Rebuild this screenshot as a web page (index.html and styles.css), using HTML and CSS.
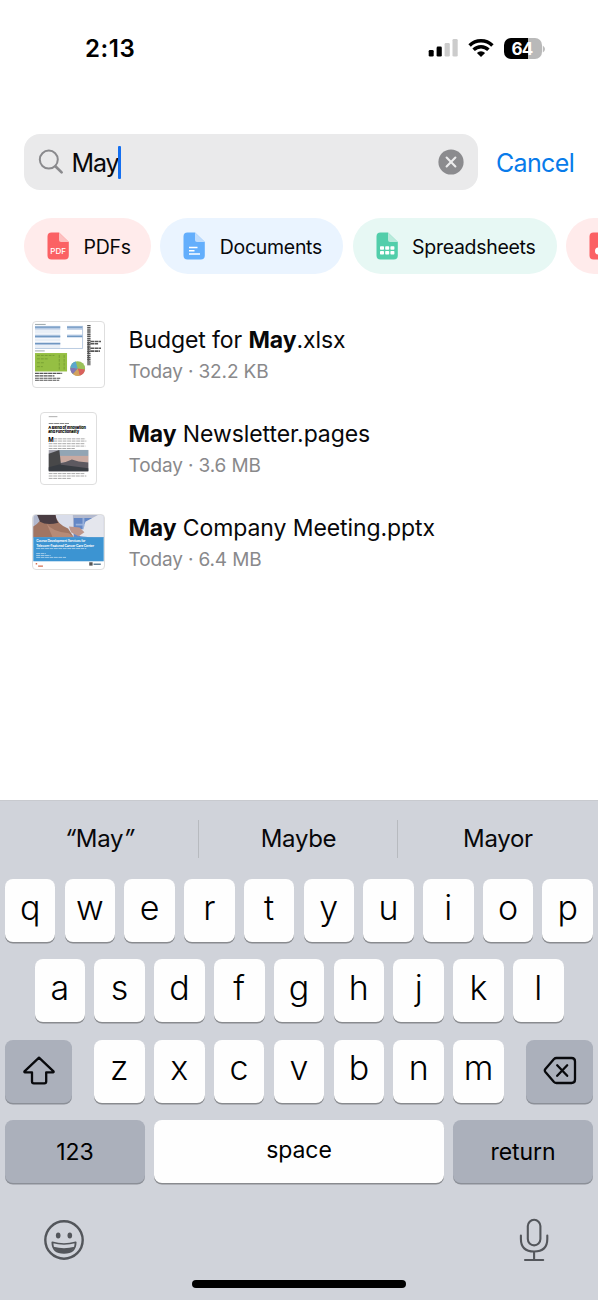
FILE: index.html
```
<!DOCTYPE html>
<html lang="en">
<head>
<meta charset="utf-8">
<title>Search files</title>
<link rel="stylesheet" href="styles.css">
</head>
<body>
<div class="phone">
  <header class="status">
    <span class="time">2:13</span>
    <div class="indicators">
      <svg class="signal" width="30" height="20" viewBox="0 0 30 20"><rect x="0.7" y="12" width="5" height="6.6" rx="1.3"/><rect x="8.6" y="8.6" width="5.2" height="10" rx="1.3"/><g fill="#cccccc"><rect x="16.6" y="5" width="5.2" height="13.6" rx="1.3"/><rect x="24.5" y="1" width="5.2" height="17.6" rx="1.3"/></g></svg>
      <svg class="wifi" width="26" height="20" viewBox="0 0 26 20"><g fill="none" stroke="#000" stroke-width="3.5"><path d="M1.6 7.5A16.2 16.2 0 0 1 24.4 7.5"/><path d="M5.6 11.7A10.6 10.6 0 0 1 20.4 11.7"/></g><path d="M13 19L8.9 14.9A5.8 5.8 0 0 1 17.1 14.9Z"/></svg>
      <div class="battery"><span>64</span><svg width="4" height="8" viewBox="0 0 4 8"><path d="M0.8 0.5Q3 2 3 4Q3 6 0.8 7.5Z" fill="#bcbcbc"/></svg></div>
    </div>
  </header>

  <div class="search-row">
    <div class="search">
      <svg class="glass" width="26" height="26" viewBox="0 0 26 26"><g fill="none" stroke="#8a8a8d" stroke-linecap="round"><circle cx="10.8" cy="10.6" r="9" stroke-width="2"/><path d="M17.6 17.5L23.6 23.4" stroke-width="2.7"/></g></svg>
      <span class="query">May</span><span class="caret"></span>
      <svg class="clear" width="26" height="26" viewBox="0 0 26 26"><circle cx="13" cy="13" r="12.6" fill="#8b8b8e"/><path d="M8.6 8.6L17.4 17.4M17.4 8.6L8.6 17.4" stroke="#ececed" stroke-width="2.1" stroke-linecap="round"/></svg>
    </div>
    <span class="cancel">Cancel</span>
  </div>

  <nav class="chips">
    <div class="chip pdf"><svg width="22" height="28" viewBox="0 0 22 28"><path d="M4.5 0.5H12L21.8 10V23.5a4 4 0 0 1-4 4H4.5a4 4 0 0 1-4-4V4.500a4 4 0 0 1 4-4Z" fill="#fb6164"/><path d="M12 0.500L21.800 10H14a2 2 0 0 1-2-2Z" fill="#fdbfbf"/><text x="11.100" y="21.600" class="pdf-label">PDF</text></svg><span>PDFs</span></div>
    <div class="chip doc"><svg width="22" height="28" viewBox="0 0 22 28"><path d="M4.500 0.500H12L21.800 10V23.500a4 4 0 0 1-4 4H4.500a4 4 0 0 1-4-4V4.500a4 4 0 0 1 4-4Z" fill="#63aefc"/><path d="M12 0.500L21.800 10H14a2 2 0 0 1-2-2Z" fill="#bedcfd"/><path d="M6 15.500H14.500M6 18.700H11.500M6 21.900H17" stroke="#fff" stroke-width="1.500"/></svg><span>Documents</span></div>
    <div class="chip sheet"><svg width="22" height="28" viewBox="0 0 22 28"><path d="M4.500 0.500H12L21.800 10V23.500a4 4 0 0 1-4 4H4.500a4 4 0 0 1-4-4V4.500a4 4 0 0 1 4-4Z" fill="#52ceaa"/><path d="M12 0.500L21.800 10H14a2 2 0 0 1-2-2Z" fill="#b9eadb"/><g fill="#fff"><rect x="4" y="14.300" width="4" height="3.500" rx=".7"/><rect x="9.200" y="14.300" width="4" height="3.500" rx=".7"/><rect x="14.400" y="14.300" width="4" height="3.500" rx=".7"/><rect x="4" y="19" width="4" height="3.500" rx=".7"/><rect x="9.200" y="19" width="4" height="3.500" rx=".7"/><rect x="14.400" y="19" width="4" height="3.500" rx=".7"/></g></svg><span>Spreadsheets</span></div>
    <div class="chip photo"><svg width="22" height="28" viewBox="0 0 22 28"><path d="M4.500 0.500H12L21.800 10V23.500a4 4 0 0 1-4 4H4.500a4 4 0 0 1-4-4V4.500a4 4 0 0 1 4-4Z" fill="#fb6164"/><circle cx="9.500" cy="19" r="3.500" fill="#fff"/></svg></div>
  </nav>

  <main class="files">
    <article class="file">
      <div class="thumb-cell">
        <svg class="thumb" width="73" height="67" viewBox="0 0 73 67">
          <g fill="#b7cbe4"><rect x="2" y="4" width="26" height="4"/><rect x="35" y="4" width="16" height="4"/><rect x="2" y="13" width="26" height="3.500"/><rect x="35" y="13" width="16" height="3"/><rect x="2" y="21" width="26" height="3"/></g>
          <g fill="#e9eff7"><rect x="2" y="8" width="26" height="4"/><rect x="2" y="17" width="26" height="3"/><rect x="2" y="24" width="26" height="3"/></g>
          <path d="M2 5.300H28M35 5.300H51M2 14.800H28M35 14.800H51M2 22.300H28" stroke="#628dbb" stroke-width="1"/>
          <path d="M28 27.300H51V4M2 27.300H28" fill="none" stroke="#a7bdd8" stroke-width=".8"/>
          <path d="M2 2.500H13M2 29.800H12" stroke="#9aa4a8" stroke-width="1"/>
          <g stroke="#555" fill="none"><path d="M57.500 3V45" stroke-width="3.500" stroke-dasharray="1.500 .7"/><path d="M57 20V40M59 20H70M59 22.500H67M59 27H70M59 30H69" stroke-width="1.600" stroke-dasharray="4 .5"/></g>
          <rect x="2" y="32" width="33" height="19" fill="#95bf43"/><path d="M4 34.500H22M4 38H16M4 42H11M4 46H10M27 34V50M32 34V50" stroke="#719730" stroke-width=".8" stroke-dasharray="3 1"/>
          <path d="M2 53H30M2 55.500H22M2 58H28M2 60H27" stroke="#555" stroke-width="1.200" stroke-dasharray="4 .5"/>
          <g transform="translate(46 48)"><circle r="7.600" fill="#9bc15a"/><path d="M0 0L7.500 1A7.600 7.600 0 0 1 2 7.300Z" fill="#d9615d"/><path d="M0 0L2 7.300A7.600 7.600 0 0 1-5 5.700Z" fill="#d5a15e"/><path d="M0 0L-5 5.700A7.600 7.600 0 0 1-7.600-1Z" fill="#8276b4"/><path d="M0 0L-7.600-1A7.600 7.600 0 0 1-2-7.300Z" fill="#5ba7cd"/></g>
        </svg>
      </div>
      <div class="info"><div class="name">Budget for <b>May</b>.xlsx</div><div class="meta">Today · 32.2 KB</div></div>
    </article>
    <article class="file">
      <div class="thumb-cell">
        <svg class="thumb" width="57" height="73" viewBox="0 0 57 73">
          <path d="M8 3.500H17" stroke="#aaa"/><path d="M8 10.600H29" stroke="#888" stroke-width="1.100" stroke-dasharray="5 .6"/>
          <text x="7.500" y="16.000" class="headline" textLength="39">A Blend of Innovation</text><text x="7.500" y="20.800" class="headline" textLength="32">and Functionality</text>
          <text x="7.500" y="29.400" class="dropcap">M</text>
          <path d="M13 26.500H46M13 28.800H47M8 31.500H45M8 34H46M8 36.500H35M8 62.500H45M8 65H47M8 67.500H31" stroke="#8b8b8b" stroke-width=".75" stroke-dasharray="4 .7"/>
          <rect x="8" y="38" width="41" height="22" fill="#a5a5af"/><path d="M19 44H49V51H19Z" fill="#c9aaa1"/><path d="M19 38H49V44H19Z" fill="#92a5b4"/><path d="M19 52Q26 51 32 48L39 50L49 51V60H8L19 53Z" fill="#5d5960"/><path d="M8 42L19 38L21 56L8 59Z" fill="#484849"/><path d="M8 56L19 53L49 57V60H8Z" fill="#383c42"/>
        </svg>
      </div>
      <div class="info"><div class="name"><b>May</b> Newsletter.pages</div><div class="meta">Today · 3.6 MB</div></div>
    </article>
    <article class="file">
      <div class="thumb-cell">
        <svg class="thumb" width="73" height="56" viewBox="0 0 73 56">
          <rect x="0" y="0" width="73" height="24" fill="#b2b9ce"/><path d="M22 0H41L42 23H25Z" fill="#d9ddea"/><path d="M42 3H62V23H42Z" fill="#6487c5"/><path d="M52 3V22M44 10H62" stroke="#99b1db" stroke-width="2"/>
          <path d="M0 12Q8 7 10 0H23Q24 9 36 14L42 23H0Z" fill="#a17562"/><path d="M4 0H23Q24 6 26 8Q14 11 7 7Z" fill="#493c42"/><path d="M14 9Q19 17 37 19L42 23H20Z" fill="#b78b77"/><path d="M54 7L67 0H73V23H59L49 22L38 17L39 13L52 15Z" fill="#e4e6ed"/><path d="M37 12L48 13L53 18L47 22L39 18Z" fill="#bd958a"/>
          <rect x="0" y="23" width="73" height="25" fill="#3c94d2"/>
          <text x="3" y="28.500" class="slide" textLength="51">Course Development Services for</text><text x="3" y="32.900" class="slide" textLength="60">Telecom-Featured Cancer Care Center</text>
          <path d="M3 34.800H55M3 40H13M3 42H18M3 44H34" stroke="#bcdbf0" stroke-width=".8" stroke-dasharray="4 .6"/>
          <path d="M2.500 50.500H4M5 53H10" stroke="#d36f52" stroke-width="1.500"/><rect x="58" y="49" width="3.500" height="3.500" fill="#555"/><path d="M62.500 51H70" stroke="#638197" stroke-width="1.600"/>
        </svg>
      </div>
      <div class="info"><div class="name"><b>May</b> Company Meeting.pptx</div><div class="meta">Today · 6.4 MB</div></div>
    </article>
  </main>

  <section class="keyboard">
    <div class="suggestions"><span><i>“</i>May<i>”</i></span><span>Maybe</span><span>Mayor</span></div>
    <div class="keys">
      <div class="key-row"><div class="key">q</div><div class="key">w</div><div class="key">e</div><div class="key">r</div><div class="key">t</div><div class="key">y</div><div class="key">u</div><div class="key">i</div><div class="key">o</div><div class="key">p</div></div>
      <div class="key-row middle"><div class="key">a</div><div class="key">s</div><div class="key">d</div><div class="key">f</div><div class="key">g</div><div class="key">h</div><div class="key">j</div><div class="key">k</div><div class="key">l</div></div>
      <div class="key-row third">
        <div class="key dark"><svg width="34" height="30" viewBox="0 0 34 30"><path d="M17 1.600L31.500 15.300Q32 16.300 31 16.300H24.200V25.500Q24.200 27.300 22.400 27.300H11.800Q10 27.300 10 25.500V16.300H3Q2 16.300 2.500 15.300Z" fill="none" stroke="#08090c" stroke-width="2.300" stroke-linejoin="round"/></svg></div>
        <div class="letters"><div class="key">z</div><div class="key">x</div><div class="key">c</div><div class="key">v</div><div class="key">b</div><div class="key">n</div><div class="key">m</div></div>
        <div class="key dark"><svg width="34" height="30" viewBox="0 0 34 30"><g fill="none" stroke="#08090c" stroke-width="2.300" stroke-linejoin="round" stroke-linecap="round"><path d="M13.500 2H28.500Q32 2 32 5.500V23.500Q32 27 28.500 27H13.500Q12 27 11 26L2.400 16Q1.200 14.500 2.400 13L11 3Q12 2 13.500 2Z"/><path d="M14.200 9.300L24.200 19.800M24.200 9.300L14.200 19.800"/></g></svg></div>
      </div>
      <div class="key-row bottom"><div class="key dark word">123</div><div class="key space word">space</div><div class="key dark word">return</div></div>
    </div>
    <footer class="tools">
      <svg width="42" height="42" viewBox="0 0 42 42"><circle cx="21" cy="21" r="18.700" fill="none" stroke="#53565b" stroke-width="2.400"/><ellipse cx="15.200" cy="16.500" rx="2.300" ry="2.900" fill="#53565b"/><ellipse cx="26.800" cy="16.500" rx="2.300" ry="2.900" fill="#53565b"/><path d="M9.300 23.300Q21 26.700 32.700 23.300Q32.600 34 21 34Q9.400 34 9.300 23.300Z" fill="none" stroke="#53565b" stroke-width="1.700" stroke-linejoin="round"/><path d="M10.500 27.800Q21 30.600 31.500 27.800Q29 34 21 34Q13 34 10.500 27.800Z" fill="#53565b"/></svg>
      <svg width="30" height="44" viewBox="0 0 30 44"><g fill="none" stroke="#53565b" stroke-width="2.100" stroke-linecap="round"><rect x="8.800" y="1.800" width="12.600" height="25.600" rx="6.300"/><path d="M1.900 17.500V21Q1.900 33.500 15.100 33.500Q28.300 33.500 28.300 21V17.500M15.100 33.500V42M6 42H24.200"/></g></svg>
    </footer>
    <div class="home"></div>
  </section>
</div>
</body>
</html>
```
FILE: styles.css
```
* { box-sizing: border-box; }
body { margin: 0; background: #fff; color: #08080a; font-family: Inter, "Liberation Sans", sans-serif; }
svg { display: block; flex: none; }
.phone { width: 598px; height: 1300px; overflow: hidden; display: flex; flex-direction: column; }

.status { height: 134px; flex: none; padding: 33px 52px 0 85px; display: flex; justify-content: space-between; align-items: flex-start; }
.time { font-size: 24px; font-weight: 600; line-height: 32px; letter-spacing: .6px; color: #000; }
.indicators { display: flex; padding-top: 5px; }
.wifi { margin-left: 10px; }
.battery { display: flex; align-items: center; margin-left: 10px; height: 21px; }
.battery span { width: 38px; height: 21px; border-radius: 7px; background: linear-gradient(90deg, #000 0 64%, #b9b9b9 64%); color: #fff; font-size: 17px; font-weight: 700; line-height: 22px; text-align: center; letter-spacing: -.8px; padding-right: 2px; }

.search-row { height: 56px; flex: none; padding-left: 24px; display: flex; align-items: center; }
.search { width: 454px; height: 56px; border-radius: 16px; background: #eaeaeb; display: flex; align-items: center; padding: 0 14px 0 14px; }
.query { font-size: 25px; letter-spacing: -1.1px; margin-left: 7.500px; line-height: 56px; padding-top: 1px; }
.caret { width: 3px; height: 33px; border-radius: 1px; background: #146ff0; margin-left: -1px; }
.clear { margin-left: auto; }
.cancel { font-size: 25px; letter-spacing: -.65px; color: #087bea; margin-left: 18px; padding-top: 1px; }

.chips { display: flex; gap: 9.300px; flex: none; margin: 28px 0 0 24px; height: 56px; }
.chip { flex: none; height: 56px; border-radius: 28px; display: flex; align-items: center; padding-left: 23px; font-size: 19.500px; line-height: 56px; letter-spacing: -.3px; }
.chip span { margin-left: 14.500px; white-space: nowrap; padding-top: 1px; }
.pdf { width: 127px; background: #ffebeb; }
.doc { width: 183px; background: #eaf4ff; }
.sheet { width: 204.500px; background: #e7f8f4; }
.photo { width: 140px; background: #ffebeb; }
.pdf-label { font-size: 8px; font-weight: 500; letter-spacing: 0; fill: #fff; text-anchor: middle; }

.files { margin-top: 33.500px; height: 492.500px; flex: none; }
.file { height: 93.700px; display: flex; align-items: center; padding-left: 32px; }
.thumb-cell { width: 73px; display: flex; justify-content: center; }
.thumb { border: 1px solid #dedede; border-radius: 4px; background: #fff; }
.info { margin-left: 23.500px; white-space: nowrap; padding-top: 4px; }
.name { font-size: 23px; line-height: 31px; letter-spacing: -.09px; }
.name b { font-weight: 700; }
.meta { font-size: 19px; line-height: 31px; letter-spacing: -.13px; color: #89898b; }
.headline { font-size: 4px; font-weight: 800; }
.dropcap { font-size: 6px; font-weight: 700; }
.slide { font-size: 3.500px; font-weight: 600; fill: #fff; }

.keyboard { height: 500px; flex: none; background: #d0d3da; border-top: 1px solid #c8cacf; display: flex; flex-direction: column; }
.suggestions { display: grid; grid-template-columns: 199px 199px 200px; height: 36px; margin-top: 19px; flex: none; }
.suggestions span { text-align: center; font-size: 24px; line-height: 38px; letter-spacing: -.3px; }
.suggestions span + span { box-shadow: -1px 0 0 #b7babf; }
.keys { display: flex; flex-direction: column; gap: 17.300px; padding: 23px 5px 0; flex: none; }
.key-row, .letters { display: flex; gap: 9.250px; }
.middle { padding: 0 29.500px; }
.key { flex: 1 1 0; min-width: 0; height: 63px; border-radius: 8px; background: #fefefe; box-shadow: 0 1.500px 0 #898b8f; display: flex; align-items: center; justify-content: center; font-size: 34px; font-weight: 350; line-height: 50px; padding-bottom: 6px; color: #000; }
.third { justify-content: space-between; gap: 0; }
.letters { width: 410px; }
.dark { background: #abb0bb; padding-bottom: 0; box-shadow: 0 1.500px 0 #8b8f97; }
.third > .dark { flex: 0 0 67px; }
.bottom .dark { flex: 0 0 140px; }
.word { font-size: 23px; font-weight: 400; letter-spacing: -.1px; }
.bottom .dark { padding-top: 1px; }
.space { padding-bottom: 3px; }
.tools { display: flex; justify-content: space-between; align-items: center; height: 44px; margin-top: 35px; padding: 0 49px 0 42.500px; flex: none; }
.home { width: 214px; height: 8px; border-radius: 4px; background: #000; margin: 18.500px auto 0; flex: none; }
```
